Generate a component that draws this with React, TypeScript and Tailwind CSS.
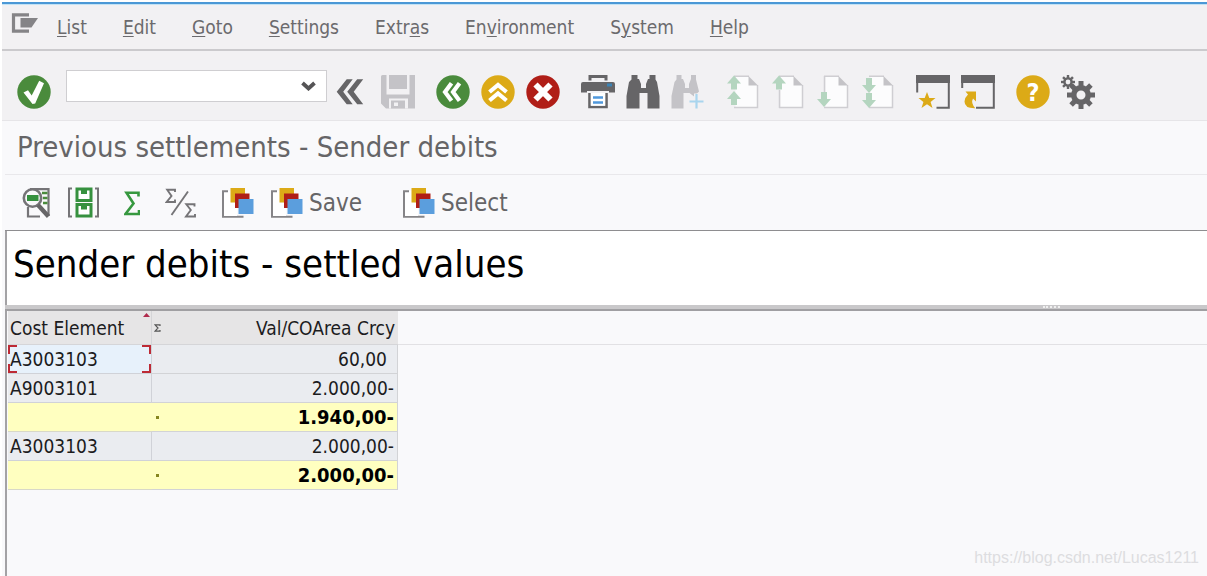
import type { ReactNode } from "react";

const GREEN = "#4a8b3c";
const GOLD = "#dcaa17";
const RED = "#b01e17";
const GREY = "#666567";
const SOFT = "#c4c3c7";
const MINT = "#b4d5bf";

// the part between the bars is the underlined access key
const MENU = ["|L|ist", "|E|dit", "|G|oto", "|S|ettings", "Extr|a|s", "En|v|ironment", "S|y|stem", "|H|elp"];

type Row = { element: string; value: string; total?: boolean; selected?: boolean };

const ROWS: Row[] = [
  { element: "A3003103", value: "60,00", selected: true },
  { element: "A9003101", value: "2.000,00-" },
  { element: "", value: "1.940,00-", total: true },
  { element: "A3003103", value: "2.000,00-" },
  { element: "", value: "2.000,00-", total: true },
];

function Tool({ label, disabled, children }: { label: string; disabled?: boolean; children: ReactNode }) {
  return (
    <button type="button" aria-label={label} disabled={disabled} className="shrink-0">
      <svg width="34" height="34" viewBox="0 0 34 34" fill="none">
        {children}
      </svg>
    </button>
  );
}

function Disc({ color }: { color: string }) {
  return <circle cx="17" cy="17" r="16.7" fill={color} />;
}

function Page() {
  return (
    <>
      <path d="M9.500 1h13l9 9v22.500h-22z" fill="#fcfcfd" />
      <path d="M8 1.200H23M31.500 10V32.500H8" stroke="#cfced2" strokeWidth="1.500" />
      <path d="M22.500 1l9.500 9.500h-9.500z" fill={SOFT} />
    </>
  );
}

function Up({ y }: { y: number }) {
  return <path d={`M8 ${y}l7 8h-4v6h-6v-6h-4z`} fill={MINT} />;
}

function Down({ y }: { y: number }) {
  return <path d={`M5 ${y}h6v7h4l-7 8-7-8h4z`} fill={MINT} />;
}

function Window() {
  return (
    <>
      <path d="M1.200 17.500V1.200h31.600V32.800H20.500" stroke={GREY} strokeWidth="2" />
      <path d="M0 0h34v8H0z" fill={GREY} />
    </>
  );
}

function Binoculars({ color }: { color: string }) {
  return (
    <path
      d="M5.500 0h6v4h1.500l2 5v4h5V9l2-5h1.500V0h6v4.500l1.500 2.500 2.500 14v12.500H21.500V18h-8v15.500H.500V21L3 7l2.500-2.500z"
      fill={color}
    />
  );
}

function Gear({ cx, cy, r, body, hole, tooth }: { cx: number; cy: number; r: number; body: number; hole: number; tooth: number }) {
  return (
    <g stroke={GREY}>
      <circle cx={cx} cy={cy} r={(body + hole) / 2} strokeWidth={body - hole} />
      {[0, 45, 90, 135, 180, 225, 270, 315].map((a) => (
        <path key={a} d={`M${cx} ${cy - body + 1}V${cy - r}`} strokeWidth={tooth} transform={`rotate(${a} ${cx} ${cy})`} />
      ))}
    </g>
  );
}

function MainToolbar() {
  return (
    <div className="flex h-[70px] items-center gap-[21px] border-b border-[#e6e5e8] bg-[#f2f1f3] pt-3 pl-[15px]">
      <div className="flex items-center gap-[15px]">
        <Tool label="Enter">
          <Disc color={GREEN} />
          <path d="M6.500 17.500l4.500-2.200 3.700 5.200L22.200 5.700l4.800 2.500L18.200 28.500l-2.700.5z" fill="#fff" />
        </Tool>
        <div className="mb-3 flex h-8 w-[261px] items-center border border-[#cfced1] bg-white pr-[10px]">
          <input aria-label="Command" className="h-full min-w-0 flex-1 px-2 text-[19px] outline-none" />
          <button type="button" aria-label="Command history">
            <svg width="15" height="10" viewBox="0 0 15 10" fill="none">
              <path d="M1.500 2l6 5.500 6-5.500" stroke="#555456" strokeWidth="3.800" />
            </svg>
          </button>
        </div>
      </div>

      <div className="-ml-[14px] flex items-center gap-[13px]">
        <Tool label="Hide command field">
          <path d="M2.700 16.700l10-12.500h6L9.200 16.700l9.500 12.500h-6zM13.200 16.700l10-12.500h6l-9.500 12.500 9.500 12.500h-6z" fill={GREY} />
        </Tool>
        <Tool label="Save document" disabled>
          <path d="M0 1.500Q0 0 1.500 0H5.500V19.500H28.500V0H34V33.500H5L0 28.500z" fill={SOFT} />
          <path d="M8 0h18v14H8z" fill={SOFT} />
          <path d="M8 23.500h19v10H8z" fill="#f2f1f3" />
          <path d="M10 25.500h14v8H10z" fill={SOFT} />
          <path d="M13 27.500h4v3.500h-4z" fill="#f2f1f3" />
        </Tool>
      </div>

      <div className="flex items-center gap-[11px]">
        <Tool label="Back">
          <Disc color={GREEN} />
          <path d="M15.500 8.200L9 17l6.500 8.800M23.500 8.200L17 17l6.500 8.800" stroke="#fff" strokeWidth="4.200" />
        </Tool>
        <Tool label="Exit">
          <Disc color={GOLD} />
          <path d="M8.500 17L17 10l8.500 7M8.500 25.500L17 18.500l8.500 7" stroke="#fff" strokeWidth="4.200" />
        </Tool>
        <Tool label="Cancel">
          <Disc color={RED} />
          <path d="M9.500 9.500l15 15M24.500 9.500l-15 15" stroke="#fff" strokeWidth="6" />
        </Tool>
      </div>

      <div className="flex items-center gap-[11px]">
        <Tool label="Print">
          <path d="M9 5.500V1.500h16v4" stroke={GREY} strokeWidth="3" />
          <path d="M2 7h30q2 0 2 2v8.500h-6V16H6v1.500H0V9q0-2 2-2z" fill={GREY} />
          <path d="M26 8.500h5v3h-5z" fill="#3b83b5" />
          <path d="M8.500 18v14h17V18" stroke={GREY} strokeWidth="2.600" />
          <path d="M9.800 18h14.400v12.700H9.800z" fill="#fff" />
          <path d="M12 22.500h10M12 27.500h10" stroke="#5098dc" strokeWidth="2.400" />
        </Tool>
        <Tool label="Find">
          <Binoculars color={GREY} />
        </Tool>
        <Tool label="Find next" disabled>
          <path d="M5.500 0h5v4H12l2 5v4h4V9l2-5V0h5v4.500l3 12-5 5-4.500-3.500H12.500v15.500H.500V21L3.500 7l2-2.500z" fill={SOFT} />
          <path d="M25.500 18.500v15M18 26.500h14.500" stroke="#f2f1f3" strokeWidth="5" />
          <path d="M25.500 19v14.500M18.500 26.500h14" stroke="#a9d5ee" strokeWidth="2.200" />
        </Tool>
      </div>

      <div className="flex items-center gap-[11px]">
        <Tool label="First page" disabled>
          <Page />
          <Up y={0.5} />
          <Up y={16} />
        </Tool>
        <Tool label="Previous page" disabled>
          <Page />
          <path d="M8.500 15v18" stroke="#cfced2" strokeWidth="1.500" />
          <Up y={0.5} />
        </Tool>
        <Tool label="Next page" disabled>
          <Page />
          <path d="M8.500 1v16" stroke="#cfced2" strokeWidth="1.500" />
          <Down y={17} />
        </Tool>
        <Tool label="Last page" disabled>
          <Page />
          <Down y={3} />
          <Down y={18} />
        </Tool>
      </div>

      <div className="flex items-center gap-[11px]">
        <Tool label="Create new session">
          <Window />
          <path d="M11 17l2.300 6h6.200l-4.900 4 1.900 6-5.500-3.700L5.500 33l1.900-6-4.900-4h6.200z" fill={GOLD} />
        </Tool>
        <Tool label="Generate shortcut">
          <path d="M1.200 13V1.200h31.600V32.800H15" stroke={GREY} strokeWidth="2" />
          <path d="M0 0h34v8H0z" fill={GREY} />
          <path d="M4.500 16.500H15v10l-3-3q-2.500 4.500 2.300 9.700Q3.500 33.500 3.500 26.500q.2-4 3.500-7z" fill={GOLD} />
        </Tool>
      </div>

      <div className="flex items-center gap-[11px]">
        <Tool label="Help">
          <Disc color={GOLD} />
          <text x="17" y="26" textAnchor="middle" fill="#fff" className="text-[25px] font-bold">
            ?
          </text>
        </Tool>
        <Tool label="Customize local layout">
          <Gear cx={20} cy={20} r={14} body={10} hole={4.5} tooth={5} />
          <Gear cx={7} cy={7} r={7} body={4.8} hole={2.4} tooth={2.4} />
        </Tool>
      </div>
    </div>
  );
}

function Layers() {
  return (
    <svg width="34" height="32" viewBox="0 0 34 32" fill="none">
      <path d="M2 4h8v26H2z" fill="#fff" />
      <path d="M7 4.200H2v25.600h20.500" stroke="#858487" strokeWidth="2" />
      <path d="M3 16h13v13H3z" fill="#fff" />
      <path d="M9.500 1h14.500v14.500H9.500z" fill={GOLD} />
      <path d="M14 6.500h14.500V21H14z" fill={RED} />
      <path d="M17.500 12h15v15h-15z" fill="#5b9edd" />
    </svg>
  );
}

function ListToolbar() {
  return (
    <div className="flex h-14 items-center border-b border-[#8e8d90] pl-[17px] text-2xl text-[#666567]">
      <button type="button" aria-label="Details">
        <svg width="32" height="32" viewBox="0 0 32 32" fill="none">
          <path d="M8 2.200h18.500V29M6 20v9.500h12" stroke="#757477" strokeWidth="2.200" />
          <path d="M20 6h5.500M21 11h4.500M21 16h4.500" stroke={GREEN} strokeWidth="2.400" />
          <circle cx="10.500" cy="11" r="8.700" fill="#f9f9fb" stroke="#757477" strokeWidth="2.600" />
          <path d="M5 8h11.500v6H5z" fill="#36913f" />
          <path d="M16 18l10.500 11.500" stroke="#666567" strokeWidth="4.400" />
        </svg>
      </button>
      <button type="button" aria-label="Choose totals" className="ml-3">
        <svg width="34" height="32" viewBox="0 0 34 32" fill="none">
          <path d="M6 1.500H3V29.500H6M29 1.500h3V29.500H29" stroke="#757477" strokeWidth="2" />
          <path d="M11 2h14v11.500H11zM11 17.500h14V29H11z" fill="#fff" stroke="#36913f" strokeWidth="3" />
          <path d="M15 2.500h6V7h-6zM15 18h6v4.500h-6z" fill="#36913f" />
        </svg>
      </button>
      <button type="button" aria-label="Sum" className="ml-6">
        <svg width="16" height="32" viewBox="0 0 16 32" fill="none">
          <path d="M14.500 9.500V5.800H2.500L9.500 16.500l-8 10.500h13.500V23" stroke="#36983f" strokeWidth="2.600" />
        </svg>
      </button>
      <button type="button" aria-label="Subtotal" className="ml-[25px]">
        <svg width="32" height="32" viewBox="0 0 32 32" fill="none" stroke="#757477">
          <path d="M10 5V2.800H2.200L6.500 9l-4.800 6H10v-2.500" strokeWidth="1.900" />
          <path d="M23 4.500L6.500 28" strokeWidth="1.900" />
          <path d="M29.500 19.500v-2.200h-8.200l4.500 5.700-4.800 6.500h9V27" strokeWidth="1.900" />
        </svg>
      </button>
      <button type="button" aria-label="Choose variant" className="ml-6">
        <Layers />
      </button>
      <button type="button" className="ml-[15px] flex items-center gap-[5px]">
        <Layers />
        Save
      </button>
      <button type="button" className="ml-10 flex items-center gap-[5px]">
        <Layers />
        Select
      </button>
    </div>
  );
}

function CellCorners() {
  return (
    <>
      <span className="absolute top-0 left-0 h-[9px] w-[9px] border-t-2 border-l-2 border-[#bd2a35]" />
      <span className="absolute top-0 right-0 h-[9px] w-[9px] border-t-2 border-r-2 border-[#bd2a35]" />
      <span className="absolute bottom-0 left-0 h-[9px] w-[9px] border-b-2 border-l-2 border-[#bd2a35]" />
      <span className="absolute right-0 bottom-0 h-[9px] w-[9px] border-r-2 border-b-2 border-[#bd2a35]" />
    </>
  );
}

function ResultTable() {
  return (
    <table className="w-[390px] table-fixed border-separate border-spacing-0 text-[19px] leading-[26px] text-[#1c1c1e]">
      <colgroup>
        <col className="w-36" />
        <col />
      </colgroup>
      <thead>
        <tr className="h-[34px] bg-[#e6e5e6]">
          <th scope="col" className="relative border-r border-b border-[#d5d5d8] p-0 pl-0.5 text-left font-normal">
            Cost Element
            <svg className="absolute top-[2px] right-px" width="7" height="4" viewBox="0 0 7 4">
              <path d="M3.500 0L7 4H0z" fill="#b02a4c" />
            </svg>
          </th>
          <th scope="col" className="border-b border-[#d5d5d8] p-0 font-normal">
            <div className="flex items-center justify-between pr-[3px] pl-0.5">
              <svg width="7" height="8" viewBox="0 0 7 8" fill="none">
                <path d="M6 2V.800H1L4 4 1 7.200h5V6" stroke="#555" strokeWidth="1.200" />
              </svg>
              Val/COArea Crcy
            </div>
          </th>
        </tr>
      </thead>
      <tbody>
        {ROWS.map((row, i) => (
          <tr key={i} className={row.total ? "h-[29px] bg-[#ffffc0]" : "h-[29px] bg-[#eaecf0]"}>
            <td
              className={
                row.total
                  ? "border-b border-[#d8d8c8] p-0"
                  : row.selected
                    ? "relative border-r border-b border-[#d0d2d8] bg-[#e7f1fb] p-0 pl-0.5"
                    : "border-r border-b border-[#d0d2d8] p-0 pl-0.5"
              }
            >
              {row.element}
              {row.selected && <CellCorners />}
            </td>
            <td className="border-r border-b border-[#d2d3d6] p-0">
              <div className="flex items-center justify-between pr-[3px] pl-1">
                <span className={row.total ? "h-[3px] w-[3px] bg-[#86861e]" : "w-[3px]"} />
                <span className={row.total ? "text-xl leading-[26px] font-bold text-black" : ""}>
                  {row.value}
                  {/* positive amounts keep the column of the trailing sign free */}
                  {!row.value.endsWith("-") && <span className="inline-block w-[7px]" />}
                </span>
              </div>
            </td>
          </tr>
        ))}
      </tbody>
    </table>
  );
}

export default function App() {
  return (
    <div className="relative flex min-h-screen flex-col bg-white pt-[2px] pl-[2px] font-['DejaVu_Sans_Condensed','DejaVu_Sans',sans-serif]">
      <div className="h-[3px] border-b border-[#c3e3f5] bg-[#4b98d6]" />
      <nav className="flex h-[46px] items-center border-b-2 border-[#cbcacd] bg-[#f2f1f3] pl-[9px] text-[19px] text-[#6b6a6d]">
        <button type="button" aria-label="System menu" className="mr-[19px] mb-2">
          <svg width="27" height="20" viewBox="0 0 27 20" fill="none">
            <path d="M18 1.800H2.500v16.400H18" stroke="#858487" strokeWidth="3.200" />
            <path d="M9.500 5H27l-6.500 9.500H9.500z" fill="#858487" />
          </svg>
        </button>
        <div className="flex gap-9">
          {MENU.map((item) => {
            const [before, key, after] = item.split("|");
            return (
              <button type="button" key={item}>
                {before}
                <span className="underline decoration-1 underline-offset-2">{key}</span>
                {after}
              </button>
            );
          })}
        </div>
      </nav>

      <MainToolbar />

      <main className="flex flex-1 flex-col bg-[#f9f9fb] pl-[3px]">
        <h1 className="flex h-[54px] items-center border-b border-[#e9e8eb] pl-3 text-[29px] text-[#666567]">
          Previous settlements - Sender debits
        </h1>
        <ListToolbar />
        <h2 className="flex h-[74px] items-center border-l-2 border-[#a3a2a5] bg-white pb-2 pl-1.5 text-[38px] text-black">
          Sender debits - settled values
        </h2>
        <div className="flex h-[6px] items-center justify-center border-b-2 border-[#a09fa2] bg-[#c9c8ca] pl-[890px]">
          <span className="h-[2px] w-[17px] border-t-2 border-dotted border-[#f0f0f0]" />
        </div>
        <div className="flex flex-1 items-start border-l-2 border-[#a3a2a5] pl-px">
          <ResultTable />
          <div className="h-[34px] flex-1 border-b border-[#e2e1e4]" />
        </div>
      </main>

      <p className="absolute right-2 bottom-2 font-['Liberation_Sans',sans-serif] text-base leading-5 text-[#dddde0]">
        https://blog.csdn.net/Lucas1211
      </p>
    </div>
  );
}
